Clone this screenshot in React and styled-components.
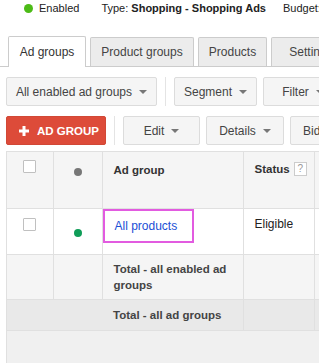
import React from 'react';
import styled, { createGlobalStyle } from 'styled-components';

const GlobalStyle = createGlobalStyle`
  html, body {
    margin: 0;
    padding: 0;
    background: #fff;
    overflow: hidden;
  }
  body {
    font-family: "Liberation Sans", Arial, sans-serif;
    font-size: 12px;
    color: #222;
  }
`;

const Page = styled.div`
  width: 520px;
  height: 363px;
  display: flex;
  flex-direction: column;
`;

const StatusLine = styled.div`
  display: flex;
  align-items: center;
  height: 16px;
  padding-left: 24px;
  white-space: nowrap;
  font-size: 11px;
`;

const Dot = styled.span`
  display: inline-block;
  flex: none;
  width: ${p => p.size || 8}px;
  height: ${p => p.size || 8}px;
  border-radius: 50%;
  background: ${p => p.color};
`;

const StatusItem = styled.span`
  margin-left: ${p => p.gap || 0}px;
  color: #222;
  b { font-weight: bold; }
`;

const TabBar = styled.div`
  display: flex;
  gap: 4px;
  margin-top: 20px;
  padding-left: 8px;
  border-bottom: 1px solid #ccc;
  height: 30px;
  align-items: flex-end;
`;

const Tab = styled.div`
  box-sizing: border-box;
  width: ${p => p.w}px;
  flex: none;
  display: flex;
  align-items: center;
  justify-content: center;
  border: 1px solid #ccc;
  border-bottom: none;
  border-radius: 2px 2px 0 0;
  background: ${p => p.active ? '#fff' : '#ececec'};
  color: ${p => p.active ? '#333' : '#444'};
  margin-bottom: ${p => p.active ? '-1px' : '0'};
  height: ${p => p.active ? '31px' : '29px'};
  white-space: nowrap;
  font-size: 12px;
`;

const Toolbar = styled.div`
  display: flex;
  align-items: center;
  gap: 6px;
  padding-left: 6px;
  margin-top: 10px;
`;

const Button = styled.div`
  box-sizing: border-box;
  height: 29px;
  width: ${p => p.w ? `${p.w}px` : 'auto'};
  padding: ${p => p.w ? '0' : '0 12px'};
  flex: none;
  display: flex;
  align-items: center;
  justify-content: center;
  gap: 7px;
  background: #f5f5f5;
  border: 1px solid #dcdcdc;
  border-radius: 2px;
  color: #444;
  white-space: nowrap;
  font-size: 12px;
`;

const RedButton = styled(Button)`
  background: #dd4b39;
  border-color: #d14836;
  color: #fff;
  font-weight: bold;
  justify-content: flex-start;
  padding-left: 12px;
  gap: 8px;
  font-size: 11.5px;
`;

const Caret = styled.span`
  flex: none;
  width: 0;
  height: 0;
  border-left: 4px solid transparent;
  border-right: 4px solid transparent;
  border-top: 4px solid #777;
  margin-top: 1px;
`;

const Separator = styled.span`
  flex: none;
  width: 1px;
  height: 29px;
  background: #e4e4e4;
  margin: 0 2px;
`;

const Plus = () => (
  <svg width="10" height="10" viewBox="0 0 10 10" style={{ flex: 'none' }}>
    <path d="M3.5 0h3v3.5H10v3H6.5V10h-3V6.5H0v-3h3.5z" fill="#fff" />
  </svg>
);

const TableArea = styled.div`
  flex: 1;
  margin-top: 6px;
  margin-left: 6px;
  background: #f0f0f0;
  border-left: 1px solid #e0e0e0;
`;

const Table = styled.table`
  border-collapse: collapse;
  table-layout: fixed;
  width: 480px;
`;

const Row = styled.tr`
  background: ${p => p.bg};
  height: ${p => p.h}px;
`;

const Cell = styled.td`
  border: 1px solid #e0e0e0;
  border-left: ${p => p.first ? 'none' : '1px solid #e0e0e0'};
  vertical-align: top;
  padding: ${p => p.pad || '10px 11px'};
  text-align: ${p => p.center ? 'center' : 'left'};
  color: ${p => p.muted ? '#444' : '#222'};
  font-weight: ${p => p.bold ? 'bold' : 'normal'};
  font-size: ${p => p.bold ? '11.5px' : '12px'};
  line-height: 16px;
`;

const Checkbox = styled.span`
  display: inline-block;
  box-sizing: border-box;
  width: 13px;
  height: 13px;
  border: 1px solid #c0c0c0;
  background: #fff;
  border-radius: 1px;
`;

const HeaderTitle = styled.span`
  display: inline-flex;
  align-items: center;
  gap: 4px;
  font-weight: bold;
  font-size: 11.5px;
  color: #333;
`;

const Help = styled.span`
  display: inline-flex;
  align-items: center;
  justify-content: center;
  box-sizing: border-box;
  width: 13px;
  height: 14px;
  border: 1px solid #ccc;
  background: #fff;
  color: #999;
  font-size: 10px;
  font-weight: normal;
`;

const Highlight = styled.div`
  box-sizing: border-box;
  width: 91px;
  height: 34px;
  border: 2px solid #e25be0;
  padding: 7px 0 0 10px;
`;

const Link = styled.a`
  color: #1a4fd6;
  text-decoration: none;
  white-space: nowrap;
`;

export default function App() {
  return (
    <>
      <GlobalStyle />
      <Page>
        <StatusLine>
          <Dot color="#4cbb17" size={9} />
          <StatusItem gap={6}>Enabled</StatusItem>
          <StatusItem gap={22}>Type: <b>Shopping - Shopping Ads</b></StatusItem>
          <StatusItem gap={17}>Budget:</StatusItem>
        </StatusLine>

        <TabBar>
          <Tab active w={78}>Ad groups</Tab>
          <Tab w={104}>Product groups</Tab>
          <Tab w={69}>Products</Tab>
          <Tab w={80}>Settings</Tab>
        </TabBar>

        <Toolbar>
          <Button w={151}>All enabled ad groups <Caret /></Button>
          <Separator />
          <Button w={83}>Segment <Caret /></Button>
          <Button w={80}>Filter <Caret /></Button>
        </Toolbar>

        <Toolbar>
          <RedButton w={100}><Plus />AD GROUP</RedButton>
          <Separator />
          <Button w={77}>Edit <Caret /></Button>
          <Button w={78}>Details <Caret /></Button>
          <Button>Bid strategy <Caret /></Button>
        </Toolbar>

        <TableArea>
          <Table>
            <colgroup>
              <col style={{ width: 46 }} />
              <col style={{ width: 49 }} />
              <col style={{ width: 141 }} />
              <col style={{ width: 71 }} />
              <col />
            </colgroup>
            <tbody>
              <Row bg="#f5f5f5" h={57}>
                <Cell first center pad="8px 0 0 0"><Checkbox /></Cell>
                <Cell center pad="12px 0 0 0"><Dot color="#777" size={8} /></Cell>
                <Cell pad="10px 11px"><HeaderTitle>Ad group</HeaderTitle></Cell>
                <Cell pad="9px 11px"><HeaderTitle>Status <Help>?</Help></HeaderTitle></Cell>
                <Cell />
              </Row>
              <Row bg="#fff" h={46}>
                <Cell first center pad="9px 0 0 0"><Checkbox /></Cell>
                <Cell center pad="16px 0 0 0"><Dot color="#0f9d58" size={8} /></Cell>
                <Cell pad="0"><Highlight><Link href="#">All products</Link></Highlight></Cell>
                <Cell pad="7px 11px">Eligible</Cell>
                <Cell />
              </Row>
              <Row bg="#f5f5f5" h={45}>
                <Cell first />
                <Cell />
                <Cell bold muted pad="6px 11px">Total - all enabled ad groups</Cell>
                <Cell />
                <Cell />
              </Row>
              <Row bg="#e9e9e9" h={31}>
                <Cell first colSpan={3} bold muted pad="7px 0 0 106px">Total - all ad groups</Cell>
                <Cell />
                <Cell />
              </Row>
            </tbody>
          </Table>
        </TableArea>
      </Page>
    </>
  );
}
